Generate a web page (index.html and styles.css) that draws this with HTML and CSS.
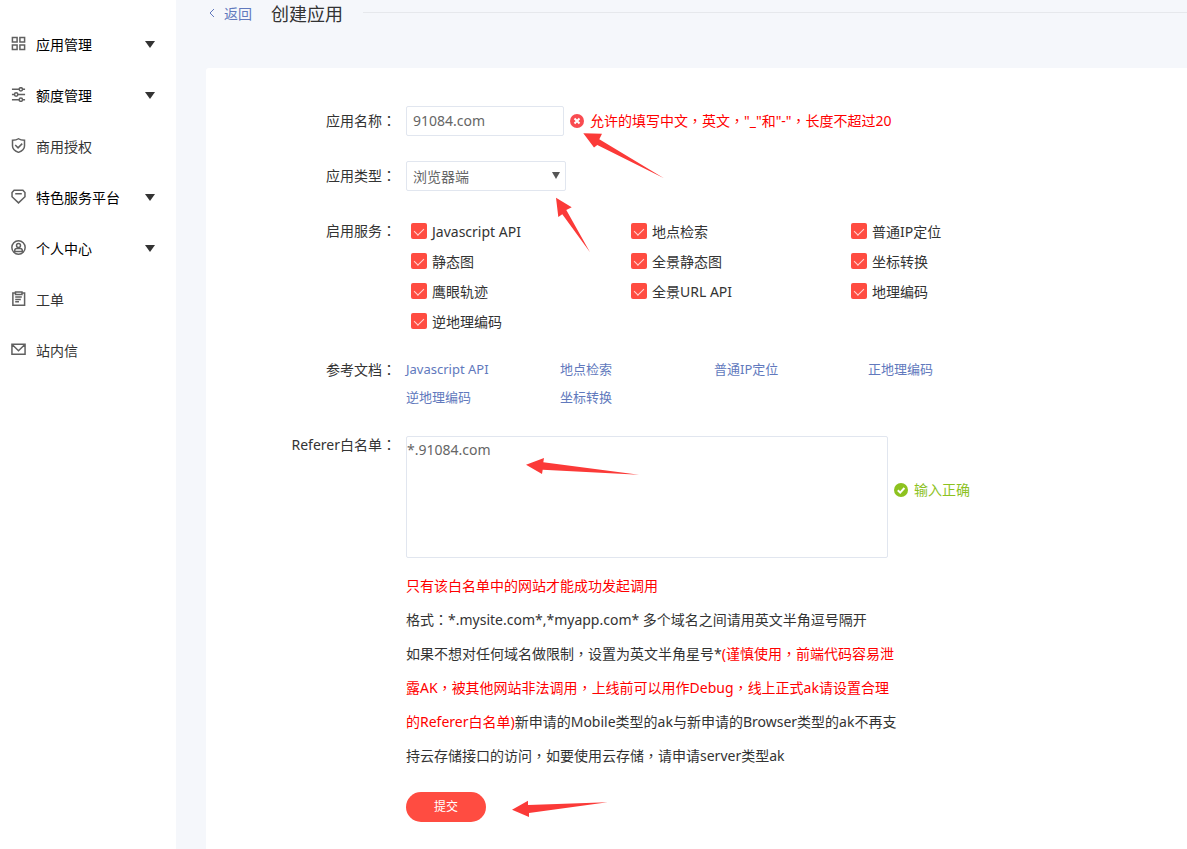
FILE: index.html
```html
<!DOCTYPE html>
<html lang="zh-CN">
<head>
<meta charset="utf-8">
<meta name="viewport" content="width=device-width, initial-scale=1">
<title>创建应用</title>
<link rel="stylesheet" href="styles.css">
</head>
<body>
<div class="layout">
  <nav class="sidebar">
    <a class="menu-item menu-group" href="#">
      <svg class="menu-icon" viewBox="0 0 16 16"><path d="M1.500 1.500h5v5h-5zM9.500 1.500h5v5h-5zM1.500 9.500h5v5h-5zM9.500 9.500h5v5h-5z"/></svg>
      <span class="menu-text">应用管理</span><span class="caret"></span>
    </a>
    <a class="menu-item menu-group" href="#">
      <svg class="menu-icon" viewBox="0 0 16 16"><path d="M1 2.500h7.500M12.500 2.500H15M1 8h2.500M7.500 8H15M1 13.500h7.500M12.500 13.500H15"/><circle cx="10.500" cy="2.500" r="1.800"/><circle cx="5.500" cy="8" r="1.800"/><circle cx="10.500" cy="13.500" r="1.800"/></svg>
      <span class="menu-text">额度管理</span><span class="caret"></span>
    </a>
    <a class="menu-item" href="#">
      <svg class="menu-icon" viewBox="0 0 16 16"><path d="M8 .8C6.300 2 4 2.500 1.600 2.500V8.500C1.600 12 4.500 14 8 15.300c3.500-1.300 6.400-3.300 6.400-6.800v-6C12 2.500 9.700 2 8 .8zM4.500 7.500l3 3 4.500-4.500"/></svg>
      <span class="menu-text">商用授权</span>
    </a>
    <a class="menu-item menu-group" href="#">
      <svg class="menu-icon" viewBox="0 0 16 16"><path d="M3.300 1.300h9.400l2.200 2.500v4.500L8 14.800 1.100 8.300V3.800zM4.500 5h7"/></svg>
      <span class="menu-text">特色服务平台</span><span class="caret"></span>
    </a>
    <a class="menu-item menu-group" href="#">
      <svg class="menu-icon" viewBox="0 0 16 16"><circle cx="8" cy="8" r="7.100"/><circle cx="8" cy="5.800" r="2.100"/><path d="M4 12.300V11c0-1.200 1-2 2.200-2h3.600c1.200 0 2.200.8 2.200 2v1.300z"/></svg>
      <span class="menu-text">个人中心</span><span class="caret"></span>
    </a>
    <a class="menu-item" href="#">
      <svg class="menu-icon" viewBox="0 0 16 16"><path d="M4.500 2H2v13.200h12.500V2H12M4.800 1h6.900v2.600H4.800zM4.500 6.500h7M4.500 9h6M4.500 11.500h4"/></svg>
      <span class="menu-text">工单</span>
    </a>
    <a class="menu-item" href="#">
      <svg class="menu-icon" viewBox="0 0 16 16"><path d="M1 2.500h14v10.500H1zM1.500 3l6.500 6.300L14.500 3"/></svg>
      <span class="menu-text">站内信</span>
    </a>
  </nav>

  <main class="main">
    <header class="page-head">
      <a class="back" href="#"><svg class="back-icon" viewBox="0 0 6 10"><path d="M5 1L1 5l4 4"/></svg>返回</a>
      <h1 class="title">创建应用</h1>
      <span class="rule"></span>
    </header>

    <form class="card">
      <div class="row">
        <label class="label" for="app-name">应用名称<span class="mark" lang="zh-TW">：</span></label>
        <div class="control inline">
          <input class="text-input" id="app-name" type="text" value="91084.com">
          <span class="status error"><svg class="status-icon" viewBox="0 0 14 14"><circle cx="7" cy="7" r="7"/><path d="M4.500 4.500l5 5M9.500 4.500l-5 5"/></svg><span>允许的填写中文<span class="mark" lang="zh-TW">，</span>英文<span class="mark" lang="zh-TW">，</span>"_"和"-"<span class="mark" lang="zh-TW">，</span>长度不超过20</span></span>
        </div>
      </div>

      <div class="row">
        <label class="label" for="app-type">应用类型<span class="mark" lang="zh-TW">：</span></label>
        <div class="control inline">
          <span class="select-box"><select class="select" id="app-type"><option>浏览器端</option></select></span>
        </div>
      </div>

      <div class="row" role="group" aria-labelledby="services-label">
        <span class="label" id="services-label">启用服务<span class="mark" lang="zh-TW">：</span></span>
        <div class="control services">
          <label class="service"><input class="check" type="checkbox" checked>Javascript API</label>
          <label class="service"><input class="check" type="checkbox" checked>地点检索</label>
          <label class="service"><input class="check" type="checkbox" checked>普通IP定位</label>
          <label class="service"><input class="check" type="checkbox" checked>静态图</label>
          <label class="service"><input class="check" type="checkbox" checked>全景静态图</label>
          <label class="service"><input class="check" type="checkbox" checked>坐标转换</label>
          <label class="service"><input class="check" type="checkbox" checked>鹰眼轨迹</label>
          <label class="service"><input class="check" type="checkbox" checked>全景URL API</label>
          <label class="service"><input class="check" type="checkbox" checked>地理编码</label>
          <label class="service"><input class="check" type="checkbox" checked>逆地理编码</label>
        </div>
      </div>

      <div class="row docs-row">
        <span class="label">参考文档<span class="mark" lang="zh-TW">：</span></span>
        <div class="control docs">
          <a class="doc" href="#">Javascript API</a>
          <a class="doc" href="#">地点检索</a>
          <a class="doc" href="#">普通IP定位</a>
          <a class="doc" href="#">正地理编码</a>
          <a class="doc" href="#">逆地理编码</a>
          <a class="doc" href="#">坐标转换</a>
        </div>
      </div>

      <div class="row referer-row">
        <label class="label" for="referer">Referer白名单<span class="mark" lang="zh-TW">：</span></label>
        <div class="control">
          <div class="inline">
            <textarea class="textarea" id="referer">*.91084.com</textarea>
            <span class="status success"><svg class="status-icon" viewBox="0 0 14 14"><circle cx="7" cy="7" r="7"/><path d="M3.800 7.200l2.400 2.400 4.200-4.600"/></svg><span>输入正确</span></span>
          </div>
          <div class="help">
            <p class="warn">只有该白名单中的网站才能成功发起调用</p>
            <p>格式<span class="mark" lang="zh-TW">：</span>*.mysite.com*,*myapp.com* 多个域名之间请用英文半角逗号隔开</p>
            <p>如果不想对任何域名做限制<span class="mark" lang="zh-TW">，</span>设置为英文半角星号*<span class="warn">(谨慎使用<span class="mark" lang="zh-TW">，</span>前端代码容易泄露AK<span class="mark" lang="zh-TW">，</span>被其他网站非法调用<span class="mark" lang="zh-TW">，</span>上线前可以用作Debug<span class="mark" lang="zh-TW">，</span>线上正式ak请设置合理的Referer白名单)</span>新申请的Mobile类型的ak与新申请的Browser类型的ak不再支持云存储接口的访问<span class="mark" lang="zh-TW">，</span>如要使用云存储<span class="mark" lang="zh-TW">，</span>请申请server类型ak</p>
          </div>
          <button class="submit" type="button">提交</button>
        </div>
      </div>

      <svg class="arrows" aria-hidden="true">
        <g transform="translate(-206 -68)">
          <path d="M583.300 133.300L602 133.700 599.300 139.300 664 178.200 597.300 145 594 147.500z"/>
          <path d="M556 197.700L571.700 207.300 566.300 210 590 252.300 562.300 214.300 558.300 217z"/>
          <path d="M526 464.700L544 458 543.300 462.300 639 474.700 542.700 469.700 542 474z"/>
          <path d="M512 809.700L528 800.700V805L607.500 802.300 529 813V817z"/>
        </g>
      </svg>
    </form>
  </main>
</div>
</body>
</html>
```
FILE: styles.css
```css
* {
  box-sizing: border-box;
}

body {
  margin: 0;
  font-family: "Noto Sans", "Noto Sans CJK SC", sans-serif;
  font-size: 14px;
  line-height: 30px;
  color: #333;
  background: #fff;
}

a {
  color: #6179bd;
  text-decoration: none;
}

/* Full-width punctuation centred in its cell */
.mark {
  font-family: "Noto Sans CJK TC", sans-serif;
  line-height: 1;
}

.layout {
  display: flex;
  min-height: 100vh;
}

/* Sidebar */
.sidebar {
  flex: 0 0 176px;
  padding-top: 19px;
}

.menu-item {
  display: flex;
  align-items: center;
  height: 51px;
  padding: 0 21px 0 11px;
  color: #333;
}

.menu-group {
  color: #000;
}

.menu-icon {
  width: 15px;
  height: 15px;
  margin-right: 10px;
  margin-bottom: 2px;
  fill: none;
  stroke: #606060;
  stroke-width: 1.6;
}

.menu-text {
  flex: 1;
}

.caret {
  border: 5px solid transparent;
  border-top: 7px solid #333;
  border-bottom: 0;
}

/* Content */
.main {
  flex: 1;
  min-width: 0;
  display: flex;
  flex-direction: column;
  padding-left: 30px;
  background: #f5f7fb;
}

.page-head {
  display: flex;
  align-items: center;
  height: 28px;
  margin-bottom: 40px;
}

.back {
  display: flex;
  align-items: center;
  padding-left: 3px;
}

.back-icon {
  width: 6px;
  height: 10px;
  margin-right: 9px;
  margin-bottom: 2px;
  fill: none;
  stroke: #6179bd;
}

.title {
  margin: 0 20px 0 19px;
  font-size: 18px;
  font-weight: 400;
}

.rule {
  flex: 1;
  height: 1px;
  margin-bottom: 3px;
  background: #e6e8ec;
}

.card {
  position: relative;
  flex: 1;
  padding: 38px 0 20px;
  background: #fff;
  border-radius: 3px 0 0 0;
}

.row {
  display: flex;
  gap: 10px;
  margin-bottom: 25px;
}

.label {
  flex: 0 0 190px;
  text-align: right;
}

.control {
  flex: 1;
  min-width: 0;
}

.inline {
  display: flex;
  align-items: center;
  gap: 6px;
}

.text-input,
.select,
.textarea {
  margin: 0;
  border: 1px solid #e1e6ef;
  border-radius: 2px;
  background: #fff;
  color: #666;
  font: inherit;
  outline: 0;
}

.text-input {
  width: 158px;
  height: 30px;
  padding: 0 6px;
}

.select-box {
  position: relative;
}

.select-box::after {
  content: "";
  position: absolute;
  top: 11px;
  right: 6px;
  border: 4px solid transparent;
  border-top: 7px solid #555;
  border-bottom: 0;
  pointer-events: none;
}

.select {
  display: block;
  appearance: none;
  width: 160px;
  height: 30px;
  padding: 2px 20px 0 6px;
  line-height: 26px;
}

.status {
  display: flex;
  align-items: center;
  gap: 6px;
}

.status-icon {
  width: 14px;
  height: 14px;
  fill: currentColor;
}

.status-icon path {
  fill: none;
  stroke: #fff;
  stroke-width: 2;
}

.error {
  color: #f00;
}

.error .status-icon {
  fill: #f94b50;
}

.success {
  color: #8dc21f;
}

.services {
  display: grid;
  grid-template-columns: repeat(3, 220px);
  padding: 1px 0 0 5px;
}

.service {
  display: flex;
  align-items: center;
  gap: 5px;
}

.check {
  appearance: none;
  display: grid;
  justify-content: center;
  width: 16px;
  height: 16px;
  margin: 0 0 2px;
  border-radius: 2px;
  background: #ccc;
}

.check:checked {
  background: #ff4c41;
}

.check:checked::after {
  content: "";
  width: 5px;
  height: 8px;
  margin-top: 3px;
  border: solid #ffd5d2;
  border-width: 0 1px 1px 0;
  transform: rotate(45deg);
}

.docs-row {
  margin-top: -7px;
}

.docs {
  display: grid;
  grid-template-columns: repeat(4, 154px);
  font-size: 13px;
  line-height: 28px;
}

.referer-row {
  margin-bottom: 0;
}

.referer-row .label {
  line-height: 18px;
}

.textarea {
  display: block;
  width: 482px;
  height: 122px;
  padding: 0;
  line-height: 26px;
  resize: none;
}

.referer-row .status {
  margin-bottom: 14px;
}

.help {
  max-width: 494px;
  margin: 11px 0 19px;
  line-height: 34px;
}

.help p {
  margin: 0;
}

.warn {
  color: #f00;
}

.submit {
  display: block;
  width: 80px;
  height: 30px;
  padding: 0;
  border: 0;
  border-radius: 15px;
  background: #ff4c41;
  color: #fff;
  font: inherit;
  font-size: 12px;
}

/* Pointers laid over the form */
.arrows {
  position: absolute;
  top: 0;
  left: 0;
  width: 100%;
  height: 100%;
  fill: #fb3a38;
  pointer-events: none;
}
```
